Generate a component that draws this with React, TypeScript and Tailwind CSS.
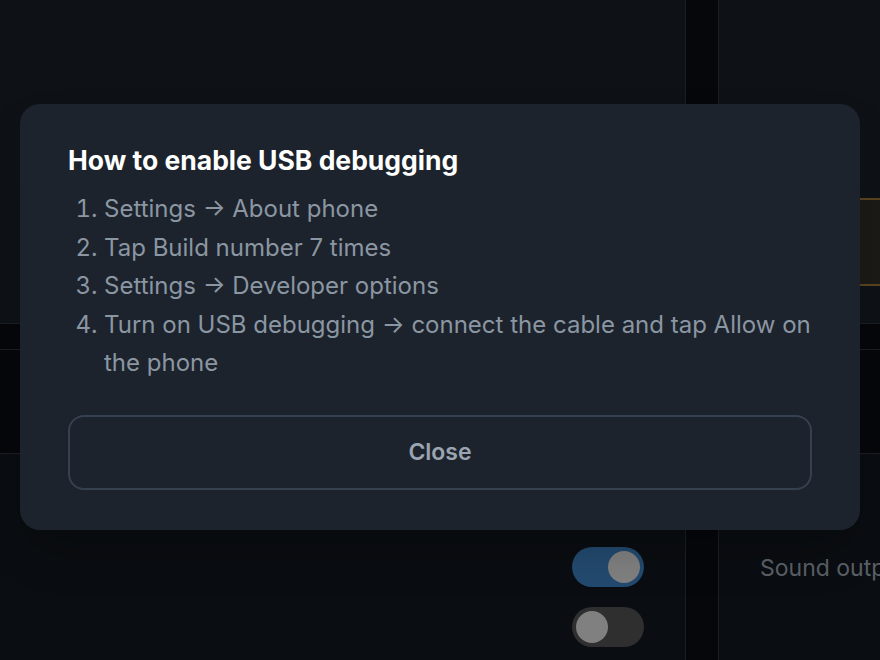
const font = { fontFamily: 'Inter, "Noto Sans", sans-serif' };

function Toggle({ on }: { on: boolean }) {
  return (
    <div
      className={`flex h-10 w-[72px] items-center rounded-full px-1 ${
        on ? 'justify-end bg-[#234a6f]' : 'justify-start bg-[#2f2f2f]'
      }`}
    >
      <div className="h-8 w-8 rounded-full bg-[#808080]" />
    </div>
  );
}

function Bands() {
  return (
    <>
      <div className="h-px bg-[#1b1f25]" />
      <div className="h-[25px] bg-[#05070a]" />
      <div className="h-px bg-[#1b1f25]" />
      <div className="h-[103px] bg-[#05070a]" />
      <div className="h-px bg-[#1b1f25]" />
    </>
  );
}

const steps = [
  'Settings → About phone',
  'Tap Build number 7 times',
  'Settings → Developer options',
  'Turn on USB debugging → connect the cable and tap Allow on the phone',
];

export default function App() {
  return (
    <div className="relative h-[660px] w-[880px] overflow-hidden bg-[#0c1014]" style={font}>
      {/* dimmed app behind the dialog */}
      <div className="flex h-full">
        <div className="flex w-[685px] shrink-0 flex-col">
          <div className="h-[323px] bg-[#0e1217]" />
          <Bands />
          <div className="flex flex-1 flex-col items-end gap-5 bg-[#0a0d11] pr-[41px] pt-[93px]">
            <Toggle on />
            <Toggle on={false} />
          </div>
        </div>
        <div className="w-[34px] shrink-0 border-x border-[#1b1f25] bg-[#05070a]" />
        <div className="flex min-w-0 flex-1 flex-col overflow-hidden">
          <div className="h-[198px] bg-[#0e1217]" />
          <div className="h-[88px] border-y-2 border-[#5a4421] bg-[#1b1a17]" />
          <div className="h-[37px] bg-[#0e1217]" />
          <Bands />
          <div className="flex-1 bg-[#0a0d11] pl-[41px] pt-[97px]">
            <span className="whitespace-nowrap text-[23px] text-[#5b6067]">Sound output</span>
          </div>
        </div>
      </div>

      {/* dialog */}
      <div className="absolute left-5 top-[104px] w-[840px] rounded-[20px] bg-[#1c232c] px-12 pb-10 pt-10 shadow-2xl">
        <h2 className="text-[26.5px] font-bold leading-8 text-white">How to enable USB debugging</h2>
        <ol className="mt-[14px] list-decimal pl-9 text-[24px] leading-[38.5px] text-[#8b96a3]">
          {steps.map((s) => (
            <li key={s}>{s}</li>
          ))}
        </ol>
        <button className="mt-8 flex h-[75px] w-full items-center justify-center rounded-2xl border-2 border-[#354150] text-[23px] font-semibold text-[#9aa5b1]">
          Close
        </button>
      </div>
    </div>
  );
}
